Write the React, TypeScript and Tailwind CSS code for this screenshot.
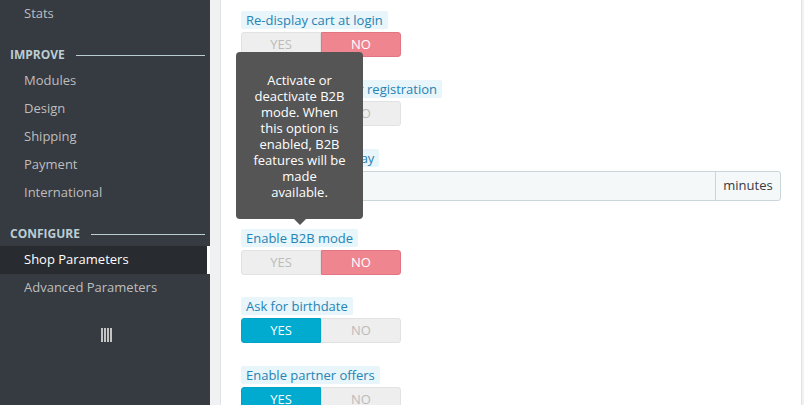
import React from "react";

const font = "font-['Open_Sans',sans-serif]";

const SideItem = ({ label, active }: { label: string; active?: boolean }) => (
  <div
    className={`flex h-[28px] items-center pl-[24px] text-[13px] ${
      active
        ? "bg-[#282b30] text-white border-r-[3px] border-white"
        : "text-[#bebebe]"
    }`}
  >
    {label}
  </div>
);

const SideHeader = ({ label }: { label: string }) => (
  <div className="flex h-[39px] items-end pb-[5px] pl-[10px] pr-[5px]">
    <div className="flex h-[14px] w-full items-center gap-[11px]">
      <span className="text-[12px] font-bold uppercase leading-none text-[#bbcdd2]">
        {label}
      </span>
      <div className="h-px flex-1 bg-[#bbcdd2]" />
    </div>
  </div>
);

const Label = ({ text }: { text: string }) => (
  <div className="flex h-[18px]">
    <span className="flex h-[18px] items-center rounded-[2px] bg-[#e8f5fb] px-[5px] text-[13px] leading-none text-[#2683b3]">
      {text}
    </span>
  </div>
);

const Toggle = ({ value }: { value: boolean }) => (
  <div className="mt-[3px] flex h-[25px] w-[160px] text-[13px] uppercase leading-none">
    <div
      className={`flex w-[80px] items-center justify-center rounded-l-[3px] border ${
        value
          ? "border-[#00a3c5] bg-[#00abcf] text-white"
          : "border-[#e2e2e2] bg-[#eeeeee] text-[#bbbbbb]"
      }`}
    >
      Yes
    </div>
    <div
      className={`flex w-[80px] items-center justify-center rounded-r-[3px] border ${
        !value
          ? "border-[#e27581] bg-[#ef858f] text-white"
          : "border-[#e2e2e2] bg-[#eeeeee] text-[#bbbbbb]"
      }`}
    >
      No
    </div>
  </div>
);

const tooltipLines = [
  "Activate or",
  "deactivate B2B",
  "mode. When",
  "this option is",
  "enabled, B2B",
  "features will be",
  "made",
  "available.",
];

export default function App() {
  return (
    <div className={`${font} flex h-[405px] w-[804px] overflow-hidden`}>
      {/* sidebar */}
      <div className="w-[210px] shrink-0 bg-[#363a41]">
        <SideItem label="Stats" />
        <SideHeader label="Improve" />
        <SideItem label="Modules" />
        <SideItem label="Design" />
        <SideItem label="Shipping" />
        <SideItem label="Payment" />
        <SideItem label="International" />
        <SideHeader label="Configure" />
        <SideItem label="Shop Parameters" active />
        <SideItem label="Advanced Parameters" />
        <div className="mt-[26px] flex justify-center gap-[1px] pl-[2px]">
          {[0, 1, 2, 3].map((i) => (
            <div key={i} className="h-[14px] w-[2px] bg-[#c4c4c4]" />
          ))}
        </div>
      </div>

      {/* main */}
      <div className="flex flex-1 bg-[#eff1f2] pl-[10px] pr-[3px]">
        <div className="relative flex-1 border-x border-[#dde3e6] bg-white px-[20px] pt-[11px]">
          <div className="flex flex-col">
            <Label text="Re-display cart at login" />
            <Toggle value={false} />

            <div className="mt-[23px]">
              <Label text="Send an email after registration" />
              <Toggle value={true} />
            </div>

            <div className="mt-[23px]">
              <Label text="Password reset delay" />
              <div className="mt-[4px] flex h-[30px] w-[540px] rounded-[3px] border border-[#c9d6da] bg-[#f5f8f9] text-[13px] text-[#363a41]">
                <div className="flex-1" />
                <div className="flex w-[65px] items-center justify-center border-l border-[#c9d6da]">
                  minutes
                </div>
              </div>
            </div>

            <div className="mt-[28px]">
              <Label text="Enable B2B mode" />
              <Toggle value={false} />
            </div>

            <div className="mt-[22px]">
              <Label text="Ask for birthdate" />
              <Toggle value={true} />
            </div>

            <div className="mt-[23px]">
              <Label text="Enable partner offers" />
              <Toggle value={true} />
            </div>
          </div>

          {/* tooltip */}
          <div className="absolute left-[15px] top-[52px] w-[127px] rounded-[4px] bg-[#555555] pb-[19px] pt-[20px] text-center text-[13px] leading-[16px] text-white">
            {tooltipLines.map((l) => (
              <div key={l}>{l}</div>
            ))}
            <div className="absolute left-[58px] top-full h-0 w-0 border-x-[6px] border-t-[6px] border-x-transparent border-t-[#555555]" />
          </div>
        </div>
      </div>
    </div>
  );
}
